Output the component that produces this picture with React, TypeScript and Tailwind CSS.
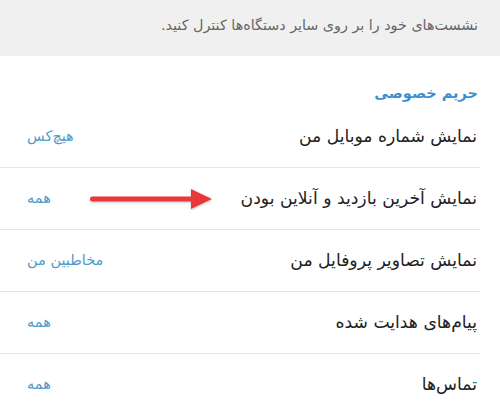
import React from 'react';

const rows = [
  { title: 'نمایش شماره موبایل من', value: 'هیچ‌کس' },
  { title: 'نمایش آخرین بازدید و آنلاین بودن', value: 'همه', arrow: true },
  { title: 'نمایش تصاویر پروفایل من', value: 'مخاطبین من' },
  { title: 'پیام‌های هدایت شده', value: 'همه' },
  { title: 'تماس‌ها', value: 'همه' },
];

const Arrow = () => (
  <svg width="126" height="24" viewBox="0 0 126 24" className="absolute left-[88px] top-[19px]">
    <defs>
      <filter id="sh" x="-10%" y="-50%" width="120%" height="200%">
        <feDropShadow dx="0" dy="1" stdDeviation="1" floodColor="#000" floodOpacity="0.25" />
      </filter>
    </defs>
    <g filter="url(#sh)" fill="#e8383b">
      <rect x="2" y="9.5" width="104" height="5" rx="2.5" />
      <path d="M103 2 L124 12 L103 22 Z" />
    </g>
  </svg>
);

export default function App() {
  return (
    <div dir="rtl" className="w-[500px] h-[416px] bg-white overflow-hidden" style={{ fontFamily: '"DejaVu Sans", sans-serif' }}>
      <div className="h-[56px] bg-[#f0f0f0] pr-[22px] pt-[13px]">
        <p className="text-[14.3px] text-[#666] leading-[24px]">نشست‌های خود را بر روی سایر دستگاه‌ها کنترل کنید.</p>
      </div>

      <div className="h-[50px] pr-[22px] pt-[24px]">
        <h2 className="text-[14.5px] font-bold text-[#3b8fd2] leading-[26px]">حریم خصوصی</h2>
      </div>

      <div className="mr-[20px]">
        {rows.map((r, i) => (
          <div
            key={i}
            className={`relative flex items-center justify-between h-[62px] pr-[3px] pl-[27px] ${
              i < rows.length - 1 ? 'border-b border-[#e6e6e6]' : ''
            }`}
          >
            <span className="text-[17.2px] text-[#222]">{r.title}</span>
            <span className="text-[14.5px] text-[#4e9cc8]">{r.value}</span>
            {r.arrow && <Arrow />}
          </div>
        ))}
      </div>
    </div>
  );
}
